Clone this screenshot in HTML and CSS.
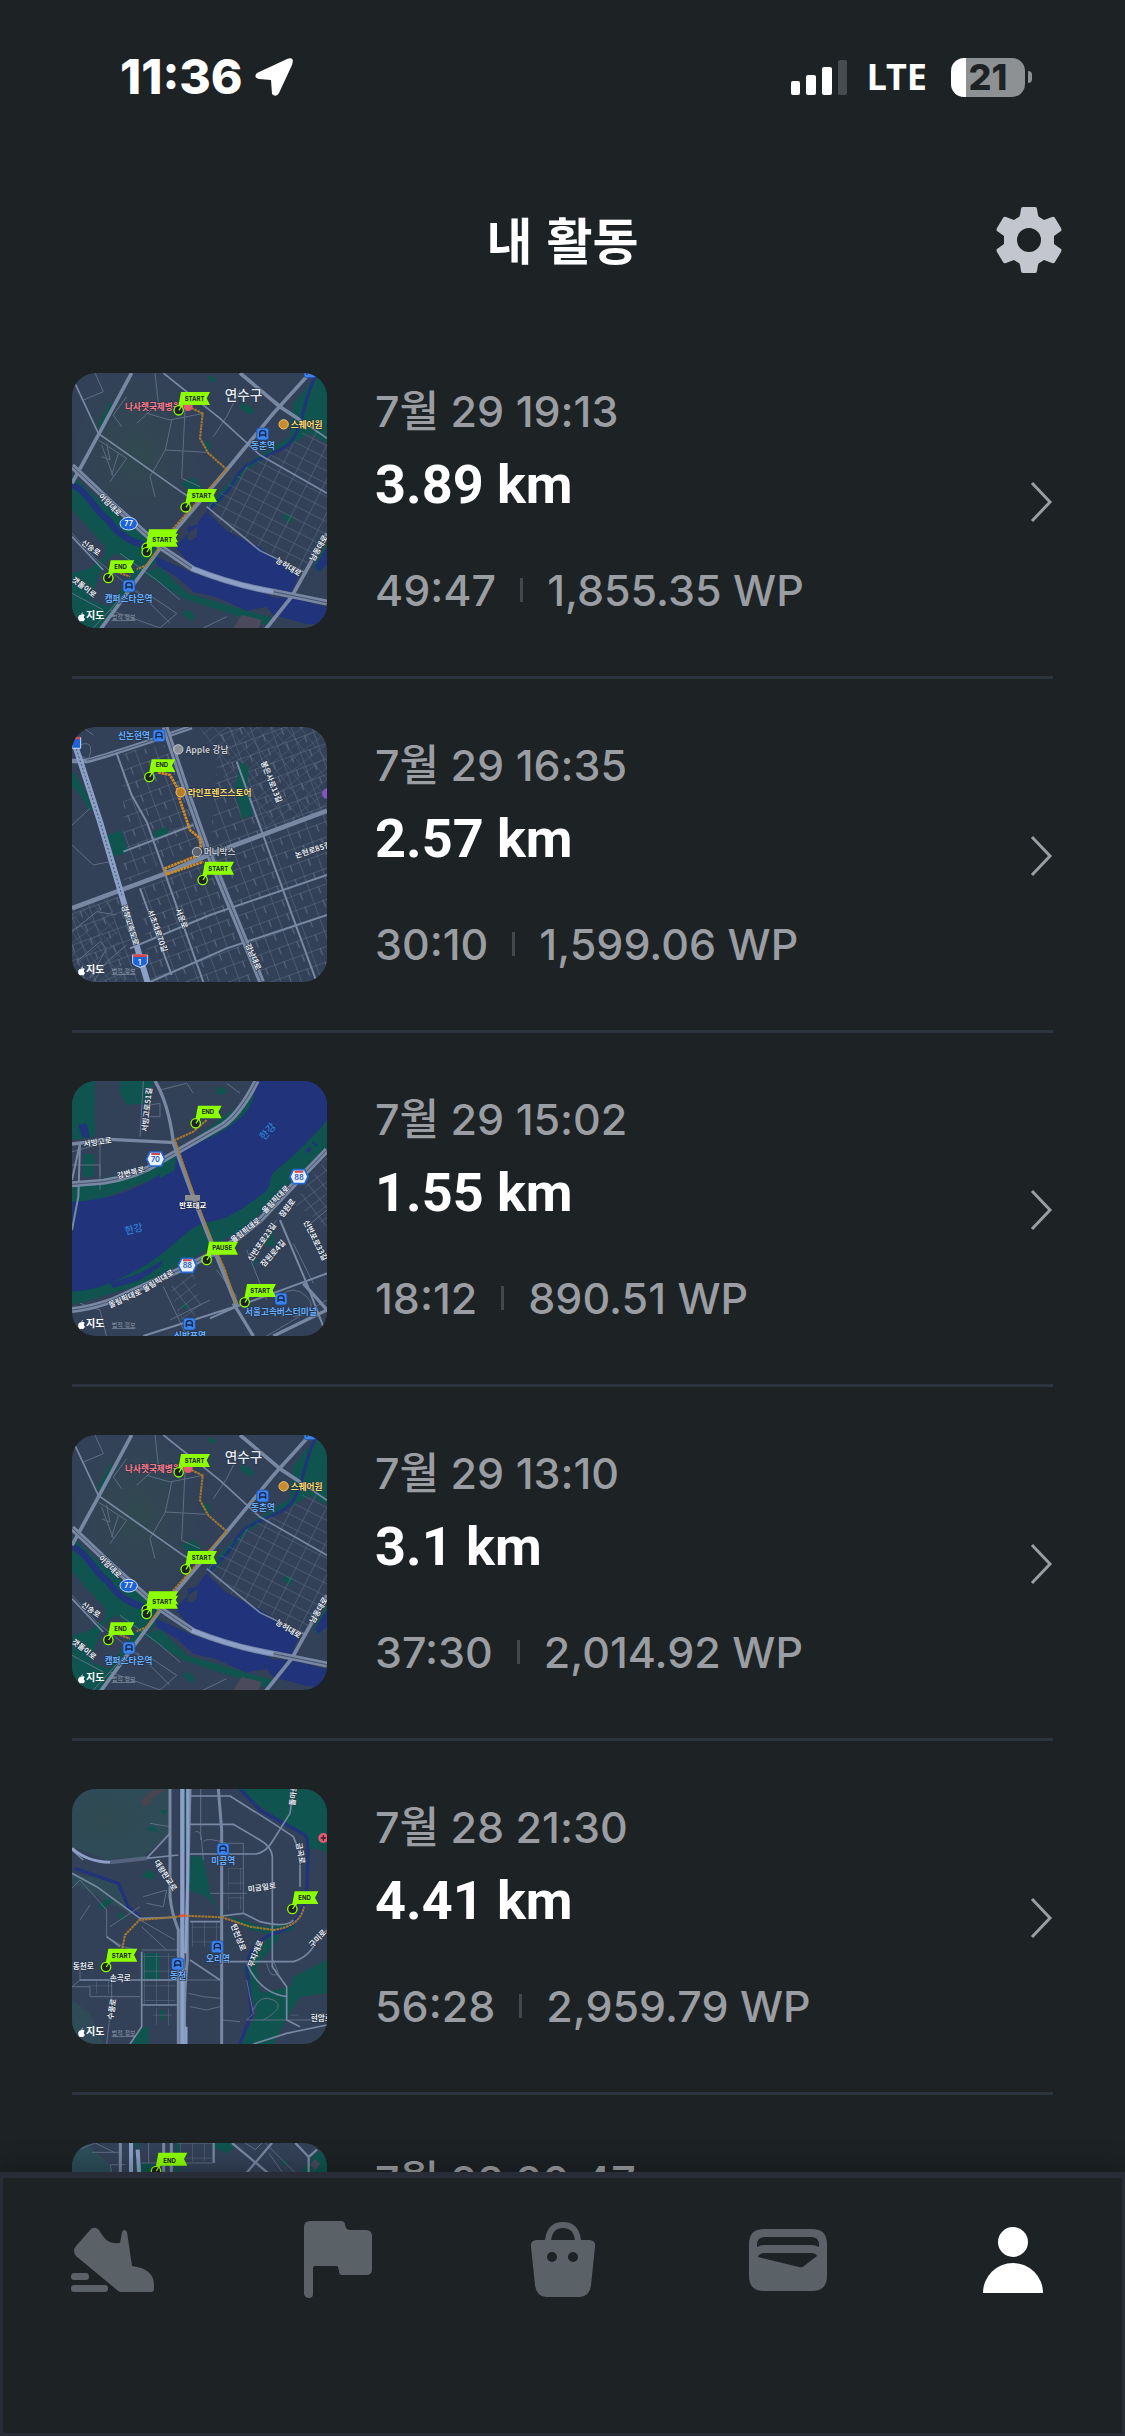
FILE: index.html
```html
<!DOCTYPE html>
<html lang="ko">
<head>
<meta charset="utf-8">
<meta name="viewport" content="width=device-width, initial-scale=1">
<title>내 활동</title>
<link rel="stylesheet" href="styles.css">
</head>
<body>
<svg class="defs" aria-hidden="true">
  <defs>
    <radialGradient id="hill"><stop offset="0" stop-color="#30494f"/><stop offset="1" stop-color="#30494f" stop-opacity="0"/></radialGradient>
    <pattern id="grid-a" width="46" height="34" patternUnits="userSpaceOnUse" patternTransform="rotate(27)"><path d="M0 0H46M0 0V34" class="lane"/></pattern>
    <pattern id="grid-b" width="58" height="44" patternUnits="userSpaceOnUse" patternTransform="rotate(-20)"><path d="M0 0H58M0 0V44M30 0V22" class="lane"/></pattern>
    <pattern id="grid-c" width="34" height="28" patternUnits="userSpaceOnUse" patternTransform="rotate(-38)"><path d="M0 0H34M0 0V28" class="lane"/></pattern>
    <pattern id="grid-d" width="36" height="44" patternUnits="userSpaceOnUse"><path d="M0 0H36M0 0V44" class="lane"/></pattern>
    <g id="flag-long"><path class="lime" d="M7-55H94L84-36 94-16H14L5 4-3 0Z"/><circle class="pin" r="14"/><path class="pole" d="M12-18 1 0"/></g>
    <g id="flag-short"><path class="lime" d="M7-53H78L68-34 78-15H14L5 4-3 0Z"/><circle class="pin" r="14"/><path class="pole" d="M12-18 1 0"/></g>
    <g id="station"><rect class="station" x="-18" y="-18" width="36" height="36" rx="8"/><path class="train" d="M-9 9V-3Q-9-10 0-10T9-3V9M-8 3H8"/></g>
    <g id="apple"><path fill="#fff" d="M10 4C13 2 20 2 21 6 17 9 18 15 22 16 20 23 16 25 12 23 8 25 5 24 3 20 0 13 2 4 10 4ZM11 3Q11-2 16-3 16 2 11 3Z"/></g>

    <g id="map-yeonsu">
      <rect width="900" height="900" fill="#334158"/>
      <ellipse cx="230" cy="280" rx="190" ry="250" fill="url(#hill)"/>
      <path class="park" d="M36 345C120 420 190 490 290 545L300 600 250 640 180 740 120 804H36V640L90 625 135 590V560L36 450ZM700 130 760 60 801 39V250L750 220 700 250 640 280 560 330 470 440 440 440 560 310 690 230ZM250 640 300 620 380 700 640 775 620 795 460 745 370 715ZM362 370 400 352 425 380 405 405ZM545 125 585 150 570 165 540 145ZM440 45 470 55 455 70ZM110 205 150 125 157 130 125 200ZM665 470 680 458 700 475 692 492ZM430 245 447 245 450 275 435 270ZM760 620 801 545V610L775 640ZM365 760 385 748 405 770 395 784Z"/>
      <path fill="#334158" d="M36 450 135 560 100 600 36 640ZM130 610 165 580 235 620 180 690 150 740 90 720Z"/>
      <path class="creek" stroke-width="20" d="M30 372C85 390 100 450 145 480 180 535 230 550 270 560"/>
      <path class="creek" stroke-width="9" d="M772 39C730 110 735 180 700 235S560 290 530 350 470 420 442 455"/>
      <path class="water" d="M440 455 500 512 600 562 715 645 690 715 560 675 400 625 345 560 385 520 382 500 410 495 430 465ZM285 588 400 640 480 662 600 690 640 712 700 715 801 742V794L740 792 640 765 620 740 560 752 470 712 400 695 350 650 290 615ZM765 620 801 560V615L775 635Z"/>
      <path fill="#334158" d="M385 520 412 500 410 530 395 542 380 538Z"/>
      <path fill="url(#grid-a)" d="M570 310 690 262 740 200 801 230V545L730 630 600 560 500 510 440 440Z"/>
      <path fill="#4a4a5c" d="M520 804 545 765 605 780 595 804Z"/>
      <path class="lane" d="M70 120 130 95 105 39M200 110 160 165 185 200M115 240 200 295 150 365M125 255 160 350M140 250 150 300 125 290M175 280 155 345M285 39 295 130 230 190M335 180 316 270 270 350 285 410M375 150 365 355M316 270 440 277M365 355 420 380M36 520 110 600 260 720M36 700 130 750M100 804 250 640M180 580 290 660 360 720M260 700 350 760 300 804M540 90 500 170 460 230M150 750 300 804M230 690 330 790M430 804 500 770M260 160 330 180 430 160"/>
      <path class="road" stroke-width="5" d="M45 70 115 220 370 400 420 430M310 39 480 175 600 285 801 400M440 440 600 572 740 640M801 235 700 165M130 630 36 530"/>
      <path class="road" stroke-width="11" d="M215 39 115 225 36 370M540 39 660 140 720 180M801 520 695 710 615 810M750 39 640 160 500 330 300 565 120 810"/>
      <path class="road" stroke-width="18" d="M36 318 160 435 300 560 400 627Q520 675 640 695L801 728"/>
      <path class="seam" d="M36 318 160 435 300 560 400 627Q520 675 640 695L801 728"/>
      <path class="highway" stroke-width="12" d="M395 625Q520 675 640 695"/>
      <path class="route" d="M385 140 428 160 420 235 445 280 500 328 340 505 260 615 230 628M170 635 210 650"/>
      <circle cx="384" cy="139" r="14" fill="#e45b70"/><circle cx="671" cy="193" r="14" fill="#c88c2c" stroke="#f2c46b" stroke-width="3"/>
      <use href="#station" x="608" y="222"/><use href="#station" x="750" y="35"/><use href="#station" x="207" y="678"/>
      <ellipse cx="206" cy="491" rx="26" ry="19" fill="#1d63d6" stroke="#c5dcff" stroke-width="3"/>
    </g>
    <g id="flags-yeonsu">
      <use href="#flag-long" x="356" y="151"/><use href="#flag-long" x="377" y="442"/><use href="#flag-long" x="260" y="563"/><use href="#flag-long" x="260" y="576"/><use href="#flag-short" x="145" y="654"/>
      <use href="#apple" x="53" y="760"/>
    </g>
  </defs>
</svg>

<div class="app">
  <div class="status">
    <div class="status-left">
      <span class="clock">11:36</span>
      <svg class="locate" viewBox="0 0 38 38" aria-hidden="true"><path fill="#fff" d="M2 15 32 1Q40-2 37 7L24 35Q21 40 17 36L16 22 4 21Q-2 19 2 15Z"/></svg>
    </div>
    <div class="status-right">
      <svg class="signal" viewBox="0 0 56 35" aria-hidden="true"><g fill="#fff"><rect y="21" width="9" height="14" rx="2"/><rect x="15" y="15" width="10" height="20" rx="2"/><rect x="31" y="7" width="10" height="28" rx="2"/></g><rect x="47" width="9" height="35" rx="2" fill="#484c50"/></svg>
      <span class="network">LTE</span>
      <span class="battery"><span class="battery-body">21</span><span class="battery-nub"></span></span>
    </div>
  </div>

  <header class="header">
    <h1 class="title">내 활동</h1>
    <button class="settings" type="button" aria-label="설정">
      <svg viewBox="0 0 66 66" aria-hidden="true"><path fill="#c3c6ce" fill-rule="evenodd" d="M27 0H39Q41 0 41 2L42 8Q42 10 45 11L48 13 56 10Q58 9 59 11L65 21Q66 23 65 24L58 29V37L65 42Q66 43 65 45L59 55Q58 57 56 56L48 53 45 55Q42 56 42 58L41 64Q41 66 39 66H27Q25 66 25 64L24 58Q24 56 21 55L18 53 10 56Q8 57 7 55L1 45Q0 43 1 42L8 37V29L1 24Q0 23 1 21L7 11Q8 9 10 10L18 13 21 11Q24 10 24 8L25 2Q25 0 27 0ZM33 21A12 12 0 1 0 33 45 12 12 0 1 0 33 21Z"/></svg>
    </button>
  </header>

  <ul class="list">
    <li class="item"><a class="activity" href="#a1">
      <svg class="thumb" viewBox="36 39 765 765" role="img" aria-label="지도">
        <use href="#map-yeonsu"/>
        <g class="label"><text class="area" x="494" y="121">연수구</text><text class="red" x="195" y="149">나사렛국제병원</text><text class="gold" x="692" y="204">스퀘어원</text><text class="blue" x="573" y="268">동춘역</text><text class="blue" x="134" y="725">캠퍼스타운역</text><text class="num" x="193" y="499">77</text><text class="maker" x="78" y="778">지도</text><text class="legal" x="155" y="778">법적 정보</text></g>
        <g class="street"><text transform="translate(115 410) rotate(45)">아암대로</text><text transform="translate(62 552) rotate(35)">신송로</text><text transform="translate(645 605) rotate(32)">능허대로</text><text transform="translate(762 605) rotate(-60)">남동대로</text><text transform="translate(34 662) rotate(38)">갯돌이로</text></g>
        <use href="#flags-yeonsu"/>
        <g class="tag"><text x="374" y="122">START</text><text x="395" y="413">START</text><text x="277" y="547">START</text><text x="163" y="626">END</text></g>
      </svg>
      <div class="info"><span class="date">7월 29 19:13</span><strong class="distance">3.89 km</strong><span class="stats"><span>49:47</span><span class="bar"></span><span>1,855.35 WP</span></span></div>
      <svg class="chevron" viewBox="0 0 22 40" aria-hidden="true"><path d="M1 2 19 21 1 40"/></svg>
    </a></li>

    <li class="item"><a class="activity" href="#a2">
      <svg class="thumb" viewBox="36 36 765 765" role="img" aria-label="지도">
        <rect width="900" height="900" fill="#334158"/>
        <path fill="url(#grid-b)" d="M190 110 330 90 420 380 190 510ZM480 36H801V801H600L450 400ZM36 590 190 530 250 801H36ZM240 520 440 430 580 801H270Z"/>
        <path fill="url(#grid-c)" opacity=".7" d="M420 36H801V300L600 340 500 200ZM36 590 150 540 200 801H36Z"/>
        <path class="park" d="M36 170Q70 200 98 285L85 285Q60 230 36 215ZM540 140 567 155 560 220 580 300 545 312 525 220ZM143 360 185 347 206 410 160 425ZM279 350 318 335 326 355 288 374Z"/>
        <path class="lane" d="M70 39 100 60M60 90Q95 75 92 110T60 120M36 330 90 280M36 390 100 450 150 440M36 650 110 590 170 600M50 740 120 680 140 700 90 790M100 801 140 740 200 690"/>
        <path class="road" stroke-width="6" d="M168 110 215 240 260 320 430 801M240 520 335 780M530 140 620 390 700 610 770 801M190 410 400 330M210 700 450 600 801 480M270 801 500 700 801 600M600 801 560 700"/>
        <path class="road" stroke-width="14" d="M36 138H80Q150 120 395 36M36 580 310 478 445 420 801 287"/>
        <path class="seam" d="M80 136Q150 120 395 36"/>
        <path class="road" stroke-width="20" d="M315 36 380 230 440 400 605 801"/>
        <path class="seam" d="M315 36 380 230 440 400 605 801"/>
        <path class="highway" stroke-width="18" d="M45 90 120 320 185 540 265 810"/>
        <path class="seam dashed" d="M45 90 120 320 185 540"/>
        <path class="route bright" d="M295 172 330 180 350 215 358 250 390 345 420 370 422 395 405 425 315 460 320 478 430 440"/>
        <use href="#station" x="297" y="62"/>
        <circle cx="355" cy="103" r="14" fill="#8c919b" stroke="#c5c8ce" stroke-width="3"/><circle cx="411" cy="411" r="14" fill="#5d636f" stroke="#b9bdc5" stroke-width="3"/><circle cx="362" cy="232" r="14" fill="#b97d25" stroke="#f2c46b" stroke-width="3"/><circle cx="802" cy="236" r="16" fill="#8555c4"/>
        <path fill="#1d63d6" stroke="#c5dcff" stroke-width="3" d="M36 68H62V100H36ZM218 720H262V745Q258 752 240 757 222 752 218 745Z"/><path stroke="#d6484c" stroke-width="8" d="M40 69H60M220 722H260"/>
        <g class="label"><text class="blue" x="174" y="72">신논현역</text><text class="grey" x="377" y="113">Apple 강남</text><text class="gold" x="383" y="242">라인프렌즈스토어</text><text class="grey" x="431" y="421">머니박스</text><text class="num" x="234" y="749">1</text><text class="maker" x="78" y="775">지도</text><text class="legal" x="155" y="775">법적 정보</text></g>
        <g class="street"><text transform="translate(184 572) rotate(73)">경부고속도로</text><text transform="translate(262 588) rotate(70)">서초대로70길</text><text transform="translate(345 584) rotate(68)">서운로</text><text transform="translate(555 690) rotate(66)">강남대로</text><text transform="translate(602 142) rotate(68)">봉은사로13길</text><text transform="translate(708 430) rotate(-18)">논현로85길</text></g>
        <use href="#flag-short" x="268" y="186"/><use href="#flag-long" x="428" y="495"/><use href="#apple" x="53" y="757"/>
        <g class="tag"><text x="287" y="157">END</text><text x="445" y="467">START</text></g>
      </svg>
      <div class="info"><span class="date">7월 29 16:35</span><strong class="distance">2.57 km</strong><span class="stats"><span>30:10</span><span class="bar"></span><span>1,599.06 WP</span></span></div>
      <svg class="chevron" viewBox="0 0 22 40" aria-hidden="true"><path d="M1 2 19 21 1 40"/></svg>
    </a></li>

    <li class="item"><a class="activity" href="#a3">
      <svg class="thumb" viewBox="36 33 765 765" role="img" aria-label="지도">
        <rect width="900" height="900" fill="#334158"/>
        <path class="park" d="M60 33H105V200L36 210V90ZM180 33H280L270 100 200 105 180 70ZM470 55 495 52 497 72 472 75ZM70 250 105 255 100 320 70 320ZM36 345 200 310 300 280 600 60V33H700L350 300 36 420ZM801 90V230L700 330 560 470 440 540 260 640 36 705V600L400 420 700 220Z"/>
        <path class="water" d="M36 395C150 390 230 360 320 300L345 240C430 220 500 180 545 140S575 60 600 33H801V150C770 190 700 260 650 300 620 320 640 350 610 370S520 445 450 455 340 540 240 595 100 660 36 665Z"/>
        <path class="water" d="M55 165 80 160 90 205 65 200ZM150 640 240 610 310 570 300 590 240 630 160 655ZM735 240 750 230 755 240 740 250ZM758 212 772 225 768 230 756 218Z"/>
        <path class="park" d="M300 285 350 240 345 300 300 325ZM360 710 385 695 380 720ZM612 500 640 480 645 530 610 525ZM580 560 595 570 580 590Z"/>
        <path fill="url(#grid-c)" d="M801 260V470L700 400ZM330 650 400 610 430 730 360 750Z"/>
        <path class="lane" d="M300 60 380 40 400 70M270 105 300 100V140H270M36 245 110 225M120 220V320M36 285H120V360M250 33 240 200M500 40 540 70M60 700 120 720 140 801M310 650 380 798M330 750 450 690M470 600 530 680M560 540 620 690M650 450 600 520M700 520 760 640M801 420 740 470M620 798 801 690M660 680Q700 640 740 680T700 740"/>
        <path class="road" stroke-width="6" d="M36 330 60 220 55 380 36 480M450 745 530 710 801 610M250 798 540 705M660 450 740 640 790 770"/>
        <path class="road" stroke-width="10" d="M285 33Q325 100 340 215M36 222 150 208 345 218M520 700 580 798M730 640 801 720M640 798 801 720"/>
        <path class="road" stroke-width="18" d="M36 343 130 335Q230 320 300 275L490 165Q540 130 590 33M801 240 700 345 600 450 500 530 380 590 160 690Q90 715 36 720"/>
        <path class="seam" d="M36 343 130 335Q230 320 300 275L490 165Q540 130 590 33M801 240 700 345 600 450 500 530 380 590 160 690Q90 715 36 720"/>
        <path class="road" stroke-width="13" d="M340 215 400 380 455 520 530 705"/>
        <path class="route" d="M440 150 400 185 345 210 400 370 455 510 495 600 528 700"/>
        <path d="M375 375H420V392H375Z" fill="#8b8c8e"/>
        <use href="#station" x="663" y="687"/><use href="#station" x="388" y="762"/>
        <g fill="#e9f1ff" stroke="#2468d2" stroke-width="5"><path d="M260 267 270 246H304L314 267 304 288H270Z"/><path d="M355 586 365 565H399L409 586 399 607H365Z"/><path d="M690 320 700 299H734L744 320 734 341H700Z"/></g>
        <path stroke="#d6484c" stroke-width="6" d="M274 252H300M369 571H395M704 305H730"/>
        <g class="label"><text class="white" x="358" y="415">반포대교</text><text class="blue" x="555" y="735">서울고속버스터미널</text><text class="blue" x="342" y="806">신반포역</text><text class="num dark" x="273" y="276">70</text><text class="num dark" x="368" y="595">88</text><text class="num dark" x="703" y="329">88</text><text class="maker" x="78" y="772">지도</text><text class="legal" x="155" y="772">법적 정보</text></g>
        <g class="river"><text transform="translate(197 494) rotate(-14)">한강</text><text transform="translate(612 212) rotate(-48)">한강</text></g>
        <g class="street"><text transform="translate(72 230) rotate(-8)">서빙고로</text><text transform="translate(173 326) rotate(-14)">강변북로</text><text transform="translate(262 186) rotate(-84)">서빙고로51길</text><text transform="translate(150 714) rotate(-24)">올림픽대로</text><text transform="translate(254 667) rotate(-32)">올림픽대로</text><text transform="translate(520 520) rotate(-38)">올림픽대로</text><text transform="translate(616 432) rotate(-46)">올림픽대로</text><text transform="translate(668 444) rotate(-52)">잠원로</text><text transform="translate(575 576) rotate(-56)">신반포로23길</text><text transform="translate(612 592) rotate(-48)">잠원로4길</text><text transform="translate(730 455) rotate(64)">신반포로33길</text></g>
        <use href="#flag-short" x="407" y="160"/><use href="#flag-long" x="440" y="570"/><use href="#flag-long" x="554" y="697"/><use href="#apple" x="53" y="753"/>
        <g class="tag"><text x="425" y="132">END</text><text x="457" y="541">PAUSE</text><text x="571" y="668">START</text></g>
      </svg>
      <div class="info"><span class="date">7월 29 15:02</span><strong class="distance">1.55 km</strong><span class="stats"><span>18:12</span><span class="bar"></span><span>890.51 WP</span></span></div>
      <svg class="chevron" viewBox="0 0 22 40" aria-hidden="true"><path d="M1 2 19 21 1 40"/></svg>
    </a></li>

    <li class="item"><a class="activity" href="#a4">
      <svg class="thumb" viewBox="36 39 765 765" role="img" aria-label="지도">
        <use href="#map-yeonsu"/>
        <g class="label"><text class="area" x="494" y="121">연수구</text><text class="red" x="195" y="149">나사렛국제병원</text><text class="gold" x="692" y="204">스퀘어원</text><text class="blue" x="573" y="268">동춘역</text><text class="blue" x="134" y="725">캠퍼스타운역</text><text class="num" x="193" y="499">77</text><text class="maker" x="78" y="778">지도</text><text class="legal" x="155" y="778">법적 정보</text></g>
        <g class="street"><text transform="translate(115 410) rotate(45)">아암대로</text><text transform="translate(62 552) rotate(35)">신송로</text><text transform="translate(645 605) rotate(32)">능허대로</text><text transform="translate(762 605) rotate(-60)">남동대로</text><text transform="translate(34 662) rotate(38)">갯돌이로</text></g>
        <use href="#flags-yeonsu"/>
        <g class="tag"><text x="374" y="122">START</text><text x="395" y="413">START</text><text x="277" y="547">START</text><text x="163" y="626">END</text></g>
      </svg>
      <div class="info"><span class="date">7월 29 13:10</span><strong class="distance">3.1 km</strong><span class="stats"><span>37:30</span><span class="bar"></span><span>2,014.92 WP</span></span></div>
      <svg class="chevron" viewBox="0 0 22 40" aria-hidden="true"><path d="M1 2 19 21 1 40"/></svg>
    </a></li>

    <li class="item"><a class="activity" href="#a5">
      <svg class="thumb" viewBox="36 27 765 765" role="img" aria-label="지도">
        <rect width="900" height="900" fill="#334158"/>
        <path fill="#2f4b57" d="M36 27H325L330 160 250 230 140 240 36 200ZM36 280 180 310 210 400 36 310ZM36 660 90 700 130 792H36Z"/>
        <ellipse cx="130" cy="120" rx="140" ry="90" fill="url(#hill)"/>
        <path class="park" d="M530 27H801V220L770 205 745 210 740 330 700 450 640 465 570 450 490 400 440 350 385 330 392 228 430 230 450 340 480 400 610 440 700 430 735 380 740 170 660 120ZM375 27H385V220H375ZM700 590 801 540V640L720 650 690 700 640 792H540L590 700 550 560 640 460 660 470 590 560 600 640 690 620ZM115 375 145 355 158 365 125 390ZM170 405 185 395 200 412 185 424ZM260 150 275 135 305 160ZM300 90 320 90 315 110ZM245 290 265 270 290 285 275 298ZM215 792 240 745 265 740 265 792ZM300 690H312V720H300ZM250 520H300V600H250Z"/>
        <path fill="#57424a" opacity=".7" d="M245 60 280 30H318L280 50 275 70 250 80Z"/>
        <path class="creek" stroke-width="10" d="M540 27 600 90 735 165Q750 180 740 330 730 440 640 460 570 490 560 560L575 700 540 792M45 265 175 310 205 380 240 412"/>
        <path fill="url(#grid-d)" d="M505 265H550V330H505ZM505 345H550V390H505ZM250 520H345V675H250ZM280 685H335V735H280ZM85 600H155V640H85ZM690 665H715V710H690ZM395 425H480V500H395Z"/>
        <path class="lane" d="M430 185Q440 170 500 190H550V400M405 155Q425 150 425 185L430 240M450 340H560M422 27V180M36 325 60 300 140 390V470L190 500 230 510M90 375 60 420M150 440 240 380M60 550V600L36 620H90V650H240M155 600V660L140 792M250 350 320 330 310 380 260 370M270 130 330 140M240 420 345 480M385 640 430 650 480 655M390 680 440 690 480 680M560 600 580 700 560 720H801M580 690Q600 640 640 660T610 720M485 720 540 725M620 550Q630 600 655 580L640 540M245 510H355M245 600H480M245 440 320 510"/>
        <path class="road" stroke-width="5" d="M390 48H510L640 130 700 170 720 220V320M390 133H520L600 180Q635 200 637 230V560L680 620V720L720 740M385 222H590Q620 215 640 180L690 100 700 27M485 408 550 400 600 425Q680 445 700 420M485 545H700Q750 530 770 480L801 450M560 550Q600 640 680 650M36 210 70 240M36 280 110 320 240 415 350 412M140 470 180 500M260 235 330 160 330 27M260 235 355 225M390 425H480M390 540 480 600M60 600H350M245 515V740L210 792M245 675H350M580 792 680 760 801 735"/>
        <path class="road" stroke-width="9" d="M475 27 485 150V792M330 27V350Q335 400 355 450V792M390 27Q380 400 382 540 370 650 375 792"/>
        <path class="highway" stroke-width="13" d="M367 27V792"/>
        <path class="highway" stroke-width="9" d="M383 27V300L377 520M378 740V792M36 205Q80 245 150 247"/><path class="road" stroke-width="12" opacity=".5" d="M150 247 260 235"/>
        <path class="route" d="M187 505 195 465 238 420 345 411 368 407 487 412 570 440 640 450Q720 440 732 380"/>
        <path stroke="#f2483d" stroke-width="7" d="M360 407H376"/>
        <use href="#station" x="489" y="208"/><use href="#station" x="472" y="500"/><use href="#station" x="353" y="552"/>
        <circle cx="790" cy="174" r="15" fill="#e45b70"/><path d="M782 174H798M790 166V182" stroke="#3a1e2a" stroke-width="4"/>
        <g class="label"><text class="blue" x="454" y="252">미금역</text><text class="blue" x="438" y="546">오리역</text><text class="blue" x="330" y="597">동천</text><text class="maker" x="78" y="766">지도</text><text class="legal" x="155" y="766">법적 정보</text></g>
        <g class="street"><text x="38" y="567">동천로</text><text x="149" y="604">손곡로</text><text x="752" y="723">현암로</text><text transform="translate(565 336) rotate(-8)">미금일로</text><text transform="translate(281 246) rotate(57)">대왕판교로</text><text transform="translate(512 436) rotate(68)">탄천상로</text><text transform="translate(578 563) rotate(-68)">무지개로</text><text transform="translate(708 190) rotate(80)">금곡로</text><text transform="translate(757 504) rotate(-46)">구미로</text><text transform="translate(158 720) rotate(-80)">수풍로</text><text transform="translate(704 78) rotate(-84)">돌마로</text></g>
        <use href="#flag-long" x="138" y="561"/><use href="#flag-short" x="697" y="387"/><use href="#apple" x="53" y="747"/>
        <g class="tag"><text x="155" y="533">START</text><text x="715" y="359">END</text></g>
      </svg>
      <div class="info"><span class="date">7월 28 21:30</span><strong class="distance">4.41 km</strong><span class="stats"><span>56:28</span><span class="bar"></span><span>2,959.79 WP</span></span></div>
      <svg class="chevron" viewBox="0 0 22 40" aria-hidden="true"><path d="M1 2 19 21 1 40"/></svg>
    </a></li>

    <li class="item"><a class="activity" href="#a6">
      <svg class="thumb" viewBox="0 0 765 765" role="img" aria-label="지도">
        <rect width="765" height="765" fill="#334158"/>
        <path fill="#2d4f59" d="M0 0H40L110 60 125 100H0Z"/>
        <path class="park" d="M425 0H480L485 15 465 30 425 15ZM190 0H200V100H190ZM310 0H322V100H310ZM765 20 730 30 690 80V100H765ZM205 60H240V100H205ZM625 60 640 48 645 60 632 70Z"/>
        <path fill="#4a4a5c" d="M715 65 728 48 745 62 730 82Z"/>
        <path fill="url(#grid-d)" d="M315 0H420V55H315Z"/>
        <path class="lane" d="M20 20 70 0 130 30M60 28H150M115 65 120 100M115 65H160M230 0V60M210 60H420M580 0 680 100M590 30 640 100M520 0 550 20 570 0"/>
        <path class="road" stroke-width="7" d="M480 0 600 100M515 100 600 0M425 0V60M670 0 710 42V100M710 42 735 20"/>
        <path class="road" stroke-width="9" d="M145 0V100M275 0V100M298 0V100"/><path class="highway" stroke-width="12" d="M177 0V100M197 20 202 100"/>
        <use href="#flag-long" x="252" y="84"/>
        <g class="tag"><text x="274" y="59">END</text></g>
      </svg>
      <div class="info"><span class="date">7월 28 20:47</span></div>
    </a></li>
  </ul>

  <nav class="tabs" aria-label="메뉴">
    <a class="tab" href="#run" aria-label="러닝"><svg viewBox="0 0 84 66" width="84" height="66" aria-hidden="true"><path d="M20 2Q24-1 28 3C34 13 37 17 49 16L51 5Q53 1 56 5L61 39C76 41 83 47 83 58V62Q83 65 80 65H50Q48 65 46 63L5 29Q1 24 5 19ZM3 46H15Q18 46 18 49.500T15 53H3Q0 53 0 49.500T3 46ZM3 58H34Q37 58 37 61.500T34 65H3Q0 65 0 61.500T3 58Z"/></svg></a>
    <a class="tab" href="#flag" aria-label="미션"><svg viewBox="0 0 68 78" width="68" height="78" aria-hidden="true"><path d="M6 0H37Q41 0 41 4L42 7Q43 9 46 9H62Q68 9 68 15V48Q68 54 62 54H38Q35 54 35 50L34 46Q34 45 32 45H11Q9 45 9 47V73Q9 77 5 77T0 73V6Q0 0 6 0Z"/></svg></a>
    <a class="tab" href="#shop" aria-label="상점"><svg viewBox="0 0 66 76" width="66" height="76" aria-hidden="true"><path d="M18 20V18Q20 3 33 3T48 18V20" fill="none" stroke="#5a6167" stroke-width="6"/><path fill-rule="evenodd" d="M6 18H60Q66 19 65 25L61 63Q60 74 50 75H16Q6 74 5 63L1 25Q0 19 6 18ZM22 30A5 5 0 1 0 22 40 5 5 0 1 0 22 30ZM43 30A5 5 0 1 0 43 40 5 5 0 1 0 43 30Z"/></svg></a>
    <a class="tab" href="#wallet" aria-label="지갑"><svg viewBox="0 0 78 62" width="78" height="62" aria-hidden="true"><path fill-rule="evenodd" d="M15 0H63Q78 0 78 15V47Q78 62 63 62H15Q0 62 0 47V15Q0 0 15 0ZM16 8Q8 8 8 16V18Q11 16 16 16H62Q67 16 70 18V16Q70 8 62 8ZM16 24Q10 24 9 28L50 38Q53 39 55 37L68 27Q67 24 62 24Z"/></svg></a>
    <a class="tab active" href="#me" aria-label="내 활동" aria-current="page"><svg viewBox="0 0 60 66" width="60" height="66" aria-hidden="true"><circle cx="30" cy="15" r="15"/><path d="M0 66A30 30 0 0 1 60 66Z"/></svg></a>
  </nav>
</div>
</body>
</html>
```
FILE: styles.css
```css
* { box-sizing: border-box; }

body {
  margin: 0;
  background: #1d2225;
  color: #fff;
  font-family: Inter, "Noto Sans CJK KR", sans-serif;
}

.defs { position: absolute; width: 0; height: 0; }

.app {
  display: flex;
  flex-direction: column;
  height: 100vh;
}

/* Status bar */
.status {
  flex: none;
  display: flex;
  justify-content: space-between;
  align-items: center;
  height: 154px;
  padding: 0 93px 0 120px;
}
.status-left, .status-right, .battery { display: flex; align-items: center; }
.status-left { gap: 12px; }
.clock { font-size: 48px; line-height: 56px; font-weight: 800; }
.locate { width: 38px; height: 38px; }
.signal { width: 56px; height: 35px; margin-right: 20px; }
.network {
  margin-right: 24px;
  font-family: "Noto Sans", "Noto Sans CJK KR", sans-serif;
  font-size: 36px;
  line-height: 48px;
  font-weight: 700;
}
.battery { gap: 3px; }
.battery-body {
  width: 74px;
  height: 39px;
  border-radius: 13px;
  background: linear-gradient(90deg, #fff 15px, #8e9194 15px);
  color: #1d2225;
  font-size: 36px;
  line-height: 39px;
  font-weight: 800;
  text-align: center;
}
.battery-nub { width: 4px; height: 12px; border-radius: 0 4px 4px 0; background: #8e9194; }

/* Page header */
.header {
  flex: none;
  display: grid;
  grid-template-columns: 1fr auto 1fr;
  align-items: center;
  height: 171px;
  padding: 0 63px;
}
.title {
  grid-column: 2;
  margin: 0;
  padding-bottom: 4px;
  font-family: "Noto Sans CJK KR", sans-serif;
  font-size: 50px;
  line-height: 60px;
  font-weight: 700;
}
.settings {
  justify-self: end;
  width: 66px;
  height: 66px;
  padding: 0;
  border: 0;
  background: none;
}
.settings svg { display: block; }

/* Activities */
.list {
  flex: 1;
  min-height: 0;
  margin: 0;
  padding: 0 72px;
  overflow: hidden auto;
  scrollbar-width: none;
  list-style: none;
}
.item { border-bottom: 3px solid #2c353d; }
.activity {
  display: flex;
  align-items: center;
  gap: 48px;
  padding: 48px 0;
  color: inherit;
  text-decoration: none;
}
.thumb { flex: none; width: 255px; height: 255px; border-radius: 24px; }
.info {
  flex: 1;
  align-self: stretch;
  display: flex;
  flex-direction: column;
  padding: 8px 0;
}
.date, .stats { color: #9a9da1; font-size: 43px; line-height: 60px; font-weight: 500; }
.distance { margin-top: 8px; font-family: Roboto, sans-serif; font-size: 54px; line-height: 72px; font-weight: 700; }
.stats { display: flex; align-items: center; gap: 24px; margin-top: auto; }
.bar { width: 3px; height: 24px; background: #43484c; }
.chevron { flex: none; width: 22px; height: 40px; overflow: visible; fill: none; stroke: #9a9da1; stroke-width: 3; }

/* Map drawing */
.thumb path { stroke-linejoin: round; }
.lane { fill: none; stroke: #5f6d84; stroke-width: 3; }
.road { fill: none; stroke: #7888a3; }
.highway { fill: none; stroke: #8c9fc6; }
.seam { fill: none; stroke: #46546d; stroke-width: 3; }
.dashed { stroke-dasharray: 6 6; }
.park { fill: #10544f; }
.water { fill: #20337b; }
.creek { fill: none; stroke: #20337b; }
.route { fill: none; stroke: #a8782c; stroke-width: 6; stroke-dasharray: 8 2; }
.route.bright { stroke: #d08a22; stroke-width: 8; }
.lime { fill: #8cff00; }
.pin { fill: #1d2125; stroke: #8cff00; stroke-width: 4; }
.pole { fill: none; stroke: #8cff00; stroke-width: 4; }
.station { fill: #3c82e8; stroke: #1b4796; stroke-width: 2; }
.train { fill: none; stroke: #12264f; stroke-width: 4; }
.tag { fill: #1d2125; font-size: 18px; font-weight: 700; }
.label, .street, .river {
  fill: #e6ebf4;
  stroke: #222d40;
  stroke-width: 3px;
  paint-order: stroke;
  font-family: "Noto Sans CJK KR", sans-serif;
  font-size: 26px;
  font-weight: 700;
}
.street { font-size: 23px; }
.river { fill: #3180d0; stroke: none; font-size: 30px; font-weight: 500; }
.area { font-size: 41px; font-weight: 500; }
.red { fill: #ff7b8c; }
.gold { fill: #ffdc6e; }
.blue { fill: #66aeff; }
.grey { fill: #c3c7ce; }
.white { fill: #fff; font-size: 22px; }
.num { fill: #fff; stroke: none; font-family: Inter, sans-serif; font-size: 22px; font-weight: 600; }
.dark { fill: #1c57bd; }
.maker { fill: #fff; stroke: none; font-size: 30px; }
.legal { fill: #8e98a8; stroke: none; font-size: 18px; font-weight: 400; text-decoration: underline; }

/* Tab bar */
.tabs {
  position: relative;
  flex: none;
  display: grid;
  grid-template-columns: repeat(5, 1fr);
  align-items: start;
  height: 264px;
  border-top: 6px solid #282c36;
  border-bottom: 3px solid #282c36;
  background: #1d2225;
  box-shadow: inset 3px 0 #282c36, inset -3px 0 #282c36, 0 -6px 24px rgba(0, 0, 0, .25);
}
.tab {
  display: flex;
  justify-content: center;
  align-items: center;
  height: 164px;
  fill: #5a6167;
}
.tab.active { fill: #fff; }
```
